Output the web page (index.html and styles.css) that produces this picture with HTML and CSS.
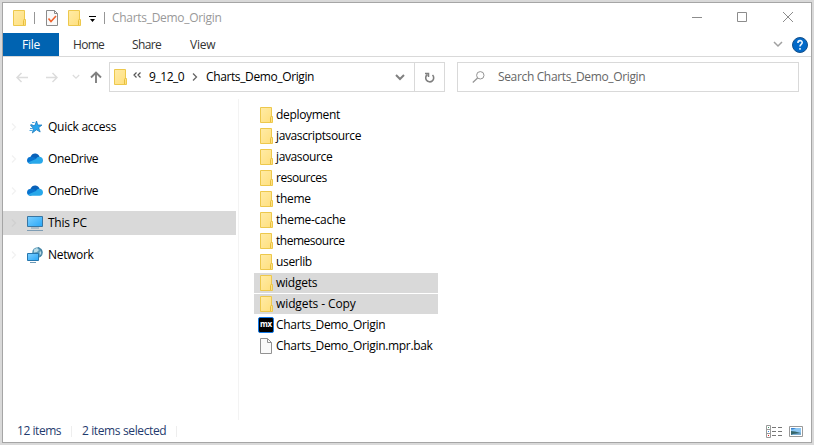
FILE: index.html
```
<!DOCTYPE html>
<html lang="en">
<head>
<meta charset="utf-8">
<title>Charts_Demo_Origin</title>
<link rel="stylesheet" href="styles.css">
</head>
<body>
<svg class="defs" width="0" height="0">
  <defs>
    <linearGradient id="fold" x1="0" y1="0" x2="1" y2="1"><stop offset="0" stop-color="#ffeba6"/><stop offset="1" stop-color="#ffdf7c"/></linearGradient>
    <linearGradient id="screen" x1="0" y1="0" x2="1" y2="1"><stop offset="0" stop-color="#7fd0ff"/><stop offset="1" stop-color="#27a7f8"/></linearGradient>
    <symbol id="folder" viewBox="0 0 13 16"><path d="M.5.5h11v9h1v6H.5z" fill="url(#fold)" stroke="#edc84c"/><path d="M10.500 15V10.500l1-1.500" fill="none" stroke="#e6be3e"/></symbol>
    <symbol id="chev" viewBox="0 0 6 8"><path d="M1 .5 4.500 4 1 7.500" fill="none" stroke="currentColor" stroke-width="1.300"/></symbol>
    <symbol id="down" viewBox="0 0 10 7"><path d="M1 1l4 4 4-4" fill="none" stroke="currentColor" stroke-width="var(--w,1.500)"/></symbol>
    <symbol id="cloud" viewBox="0 0 16 11"><path d="M3.500 4C4.500.8 7.300 0 9.500.7c1.800.5 2.600 1.700 3 3L9 7z" fill="#0961b8"/><path d="M3 4c2-.5 4 .2 7 2L4 10.800C1.500 11 0 9.500 0 7.500 0 5.500 1.200 4.200 3 4z" fill="#0873cf"/><path d="M9 6c.8-1.600 2-2.400 3.700-2.200C15 4 16 5.800 16 7.500c0 2-1.400 3.300-3.400 3.300H3.500c-1.200 0-2-.5-2.500-1.200z" fill="#28a8ea"/></symbol>
  </defs>
</svg>
<main class="window">
  <header class="titlebar">
    <svg class="folder"><use href="#folder"/></svg>
    <i class="sep sep-a"></i>
    <svg class="check" viewBox="0 0 12 16"><path d="M.5.5h8l3 3v12H.5z" fill="#fafafa" stroke="#8b8b8b"/><path d="M8.500.5v3h3" fill="none" stroke="#8b8b8b"/><path d="M2.500 8.500l2.500 3 5-5.500" fill="none" stroke="#f0622c" stroke-width="1.600"/></svg>
    <svg class="folder"><use href="#folder"/></svg>
    <svg class="qat" viewBox="0 0 7 6"><path d="M0 0h7v1H0zM1 3h5L3.500 6z" fill="#000"/></svg>
    <i class="sep sep-b"></i>
    <h1>Charts_Demo_Origin</h1>
    <svg class="controls" viewBox="0 0 102 12"><path d="M0 6.500h10M45.500 1.500h9v9h-9zM91 1l10 10M101 1 91 11" fill="none" stroke="#8c8c8c"/></svg>
  </header>
  <nav class="ribbon">
    <span class="tab file">File</span><span class="tab home">Home</span><span class="tab share">Share</span><span class="tab view">View</span>
    <svg class="collapse"><use href="#down"/></svg>
    <svg class="help" viewBox="0 0 16 16"><circle cx="8" cy="8" r="7.500" fill="#0269c8" stroke="#17518a"/><path d="M5.900 5.900c0-3 4.300-2.900 4.300-.4C10.200 7.400 8 7.200 8 9.500M8 11v1.700" fill="none" stroke="#eaf5ff" stroke-width="1.600"/></svg>
  </nav>
  <section class="toolbar">
    <svg class="back" viewBox="0 0 12 11"><path d="M12 5.500H1M5.500 1 1 5.500 5.500 10" fill="none" stroke="#dcdcdc" stroke-width="1.500"/></svg>
    <svg class="fwd" viewBox="0 0 12 11"><path d="M0 5.500h11M6.500 1 11 5.500 6.500 10" fill="none" stroke="#dcdcdc" stroke-width="1.500"/></svg>
    <svg class="recent"><use href="#down"/></svg>
    <svg class="up" viewBox="0 0 12 12"><path d="M6 12V1.500M1 6.500l5-5 5 5" fill="none" stroke="#808080" stroke-width="1.900"/></svg>
    <div class="address">
      <svg class="folder"><use href="#folder"/></svg>
      <svg class="dbl" viewBox="0 0 8 6"><path d="M3.500.5 1 3l2.500 2.500M7.500.5 5 3l2.500 2.500" fill="none" stroke="#555" stroke-width="1.200"/></svg>
      <span class="crumb num">9_12_0</span>
      <svg class="crumbchev"><use href="#chev"/></svg>
      <span class="crumb t2">Charts_Demo_Origin</span>
      <svg class="drop"><use href="#down"/></svg>
      <div class="refresh"><svg viewBox="0 0 11 12"><path d="M3.500 2.500A4 4 0 1 0 8.500 3" fill="none" stroke="#808080" stroke-width="1.600"/><path d="M1 1.500h3.500V5" fill="none" stroke="#808080" stroke-width="1.500"/></svg></div>
    </div>
    <div class="search"><svg viewBox="0 0 13 12"><circle cx="8.300" cy="4.300" r="3.700" fill="none" stroke="#949494"/><path d="M5.600 7 .8 11.500" stroke="#949494" stroke-width="1.200"/></svg><span>Search Charts_Demo_Origin</span></div>
  </section>
  <section class="body">
    <aside class="tree">
      <div class="node"><svg class="expand"><use href="#chev"/></svg><svg class="icon" viewBox="0 0 16 16"><path d="M9.500 2l1.300 4H15l-3.300 2.700 1.500 4.300-3.800-2.200L5.300 14l1.300-4.600L3.500 6.500h4.300z" fill="#28a5ee" stroke="#1674b8" stroke-width=".7"/><path d="M5 3.500h2.500M3.500 5.500h2M3 9.500h3M2.500 11.500h3" stroke="#2591d5" stroke-width=".8"/></svg><span>Quick access</span></div>
      <div class="node"><svg class="expand"><use href="#chev"/></svg><svg class="icon cloud"><use href="#cloud"/></svg><span class="t1">OneDrive</span></div>
      <div class="node"><svg class="expand"><use href="#chev"/></svg><svg class="icon cloud"><use href="#cloud"/></svg><span class="t1">OneDrive</span></div>
      <div class="node selected"><svg class="expand"><use href="#chev"/></svg><svg class="icon" viewBox="0 0 16 16"><path d="M.5 1.500h15v10H.5z" fill="url(#screen)" stroke="#3976a2"/><path d="M4 13h8M0 15.500h16" stroke="#7e9db4"/></svg><span>This PC</span></div>
      <div class="node"><svg class="expand"><use href="#chev"/></svg><svg class="icon" viewBox="0 0 16 16"><circle cx="10.500" cy="5.500" r="5.300" fill="#5b9bb9"/><path d="M7 2.500 10 1l2 2-2 2-3 .5zM12.500 5l2-1 .5 3-2 2z" fill="#b9dce7"/><path d="M11 .5c4 1.500 5 5 2 9" fill="none" stroke="#3e799b"/><path d="M.5 6.500h11v7H.5z" fill="url(#screen)" stroke="#2676ad"/><path d="M3 15.500h6" stroke="#6d9ab7"/></svg><span class="t1">Network</span></div>
    </aside>
    <div class="files">
      <div class="row"><svg class="folder"><use href="#folder"/></svg><span class="t1">deployment</span></div>
      <div class="row"><svg class="folder"><use href="#folder"/></svg><span class="t2">javascriptsource</span></div>
      <div class="row"><svg class="folder"><use href="#folder"/></svg><span class="t2">javasource</span></div>
      <div class="row"><svg class="folder"><use href="#folder"/></svg><span class="t3">resources</span></div>
      <div class="row"><svg class="folder"><use href="#folder"/></svg><span class="t1">theme</span></div>
      <div class="row"><svg class="folder"><use href="#folder"/></svg><span>theme-cache</span></div>
      <div class="row"><svg class="folder"><use href="#folder"/></svg><span class="t3">themesource</span></div>
      <div class="row"><svg class="folder"><use href="#folder"/></svg><span class="t1">userlib</span></div>
      <div class="row selected"><svg class="folder"><use href="#folder"/></svg><span>widgets</span></div>
      <div class="row selected"><svg class="folder"><use href="#folder"/></svg><span class="wide">widgets - Copy</span></div>
      <div class="row"><b class="mx">mx</b><span class="t1">Charts_Demo_Origin</span></div>
      <div class="row"><svg class="doc" viewBox="0 0 12 16"><path d="M.5.5h7l4 4v11H.5z" fill="#fafafa" stroke="#929292"/><path d="M7.500.5v4h4" fill="none" stroke="#929292"/></svg><span class="t1">Charts_Demo_Origin.mpr.bak</span></div>
    </div>
  </section>
  <footer class="status">
    <span class="count">12 items</span><i></i><span class="sel">2 items selected</span><i></i>
    <svg class="details" viewBox="0 0 16 13"><path d="M.5.5h4v12h-4zM.5 4.500h4M.5 8.500h4" fill="#fff" stroke="#999"/><path d="M6 2.500h4M12 2.500h4M6 6.500h4M12 6.500h4M6 10.500h4M12 10.500h4" stroke="#777"/><path d="M2 2h1v1H2z" fill="#3c9566"/><path d="M2 6h1v1H2z" fill="#3b8eea"/><path d="M2 10h1v1H2z" fill="#d22"/></svg>
    <svg class="thumb" viewBox="0 0 14 11"><path d="M.5.5h13v10H.5z" fill="#fff" stroke="#999"/><path d="M2 2h10v7H2z" fill="#8cc6f2"/><path d="M2 2h5L4 3.500H2z" fill="#3a83d0"/><path d="M2 5l4 .5L12 7v2H2z" fill="#35666b"/><path d="M4 8l8-1v2H2z" fill="#7caed2"/></svg>
  </footer>
</main>
</body>
</html>
```
FILE: styles.css
```
* { box-sizing: border-box; }
body { margin: 0; padding: 2px; height: 445px; background: #d9d9d9; overflow: hidden; font: 12px/16px "Open Sans", "Noto Sans", sans-serif; color: #000; letter-spacing: -.25px; }
.defs { position: absolute; }
svg { display: block; flex: none; }
span, h1 { white-space: nowrap; }
.t1 { letter-spacing: -.32px; }
.t2 { letter-spacing: -.38px; }
.t3 { letter-spacing: -.48px; }
.wide { letter-spacing: -.1px; }
.window { width: 810px; height: 441px; border: 1px solid #a5a5a5; background: #fff; display: flex; flex-direction: column; }
.folder { width: 13px; height: 16px; }

.titlebar { height: 30px; display: flex; align-items: center; padding-left: 10px; flex: none; }
.sep { width: 1px; height: 12px; background: #969696; }
.sep-a { margin: 0 11px 0 8px; }
.check { width: 12px; height: 16px; margin-right: 10px; }
.qat { width: 7px; height: 6px; margin: 1px 8px 0 8px; }
h1 { margin: 0 0 0 7px; font-size: 12px; font-weight: 400; color: #999; letter-spacing: -.3px; }
.controls { width: 102px; height: 12px; margin: -2px 17px 0 auto; }

.ribbon { height: 24px; border-bottom: 1px solid #d9d9d9; display: flex; align-items: center; flex: none; color: #333; }
.file { width: 56px; height: 23px; padding: 4px 0 0 19px; color: #fff; background: #0063b1; }
.home { width: 59px; margin-left: 14px; letter-spacing: -.7px; }
.share { width: 58px; letter-spacing: -.6px; }
.collapse { width: 10px; height: 7px; margin-left: auto; margin-right: 9px; color: #a0a0a0; }
.help { width: 16px; height: 16px; margin-right: 3px; }

.toolbar { height: 40px; display: flex; align-items: center; padding-left: 13px; flex: none; }
.back { width: 12px; height: 11px; margin-right: 18px; }
.fwd { width: 12px; height: 11px; margin-right: 14px; }
.recent { width: 8px; height: 6px; color: #dcdcdc; margin-right: 10px; }
.up { width: 12px; height: 12px; margin-right: 7px; }
.address, .search { height: 30px; border: 1px solid #d9d9d9; display: flex; align-items: center; }
.address { width: 336px; padding-left: 4px; }
.dbl { width: 8px; height: 6px; margin: -4px 8px 0 6px; }
.num { width: 43px; letter-spacing: -.45px; }
.crumbchev { width: 6px; height: 8px; color: #666; margin-right: 8px; }
.drop { width: 10px; height: 7px; margin-left: auto; margin-right: 9px; color: #808080; --w: 2; }
.refresh { width: 30px; height: 28px; border-left: 1px solid #d9d9d9; padding: 9px 0 0 9px; }
.refresh svg { width: 11px; height: 12px; }
.search { width: 342px; margin-left: 12px; padding-left: 14px; color: #666; letter-spacing: -.35px; }
.search svg { width: 13px; height: 12px; margin-right: 13px; }

.body { display: flex; height: 323px; flex: none; padding-top: 2px; }
.tree { width: 236px; border-right: 1px solid #f3f3f3; padding-top: 16px; display: flex; flex-direction: column; gap: 8px; }
.node { height: 24px; width: 233px; display: flex; align-items: center; padding-left: 8px; }
.selected { background: #d9d9d9; }
.expand { width: 6px; height: 8px; color: #f2f2f2; margin-right: 10px; }
.node.selected .expand { color: #d0d0d0; }
.icon { width: 16px; height: 16px; margin-right: 5px; }
.cloud { height: 11px; margin-bottom: 1px; }
.files { padding: 6px 0 0 15px; display: flex; flex-direction: column; gap: 1px; }
.row { width: 184px; height: 20px; display: flex; align-items: center; padding-left: 6px; }
.row .folder { margin-right: 3px; }
.mx { width: 16px; height: 16px; margin: 0 2px 0 -2px; background: #000; border: 1px solid #1279e8; border-radius: 2px; color: #fff; font-size: 8px; line-height: 12px; text-align: center; }
.doc { width: 12px; height: 16px; margin-right: 4px; }

.status { height: 22px; display: flex; align-items: center; padding-left: 14px; color: #1f3b6e; }
.status i { width: 1px; height: 11px; background: #eee; margin: 0 10px; }
.count { width: 44px; letter-spacing: -.45px; }
.sel { width: 84px; letter-spacing: -.38px; }
.details { width: 16px; height: 13px; margin-left: auto; margin-right: 7px; }
.thumb { width: 14px; height: 11px; margin-right: 8px; }
```
